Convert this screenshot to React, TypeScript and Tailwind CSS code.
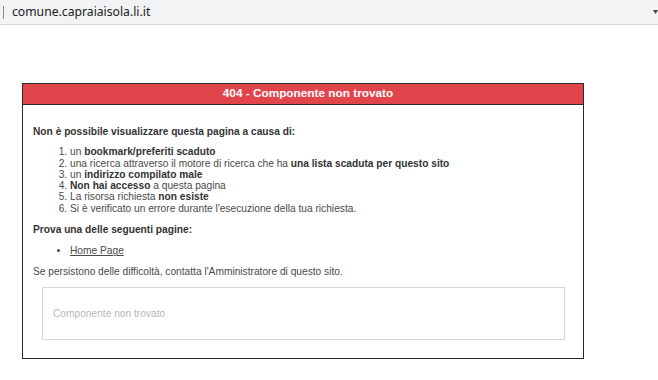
// Pagina di errore 404 "Componente non trovato" con barra indirizzi del browser.
const reasons = [
  <>un <b className="text-[#333]">bookmark/preferiti scaduto</b></>,
  <>una ricerca attraverso il motore di ricerca che ha <b className="text-[#333]">una lista scaduta per questo sito</b></>,
  <>un <b className="text-[#333]">indirizzo compilato male</b></>,
  <><b className="text-[#333]">Non hai accesso</b> a questa pagina</>,
  <>La risorsa richiesta <b className="text-[#333]">non esiste</b></>,
  <>Si è verificato un errore durante l'esecuzione della tua richiesta.</>,
];

function AddressBar() {
  return (
    <div className="flex h-[25px] items-center border-b border-[#d9dadc] bg-[#f1f3f4] font-['Noto_Sans',sans-serif]">
      <span className="ml-[3px] h-[13px] w-px bg-[#8a8a8a]" />
      <span className="ml-[8px] text-[12.2px] leading-none text-[#202124]">comune.capraiaisola.li.it</span>
      <svg className="ml-auto" width="5" height="6" viewBox="0 0 5 6">
        <path d="M0 1 L5 1 L2.5 5 Z" fill="#444" />
      </svg>
    </div>
  );
}

export default function App() {
  return (
    <div className="h-[380px] w-[658px] overflow-hidden bg-white">
      <AddressBar />
      <div className="ml-[22px] mt-[58px] w-[562px] border border-[#2a2a2a] font-['Liberation_Sans',Arial,sans-serif] text-[10.2px] leading-[11.3px] text-[#4a4a4a]">
        <div className="flex h-[21px] items-center justify-center border-b border-[#2a2a2a] bg-[#e2444c] pl-[10px] text-[11.8px] font-bold text-white">
          404 - Componente non trovato
        </div>
        <div className="px-[10px] pb-[18px] pt-[21px]">
          <p className="font-bold text-[#333]">Non è possibile visualizzare questa pagina a causa di:</p>
          <ol className="mt-[9px] list-decimal pl-[37px]">
            {reasons.map((r, i) => (
              <li key={i}>{r}</li>
            ))}
          </ol>
          <p className="mt-[10px] font-bold text-[#333]">Prova una delle seguenti pagine:</p>
          <ul className="mt-[10px] list-disc pl-[37px]">
            <li>
              <a href="#" className="underline">Home Page</a>
            </li>
          </ul>
          <p className="mt-[9px]">Se persistono delle difficoltà, contatta l'Amministratore di questo sito.</p>
          <div className="ml-[9px] mt-[10px] flex h-[53px] w-[523px] items-center border border-[#d6d6d6] pl-[10px] text-[#b8b8b8]">
            Componente non trovato
          </div>
        </div>
      </div>
    </div>
  );
}
